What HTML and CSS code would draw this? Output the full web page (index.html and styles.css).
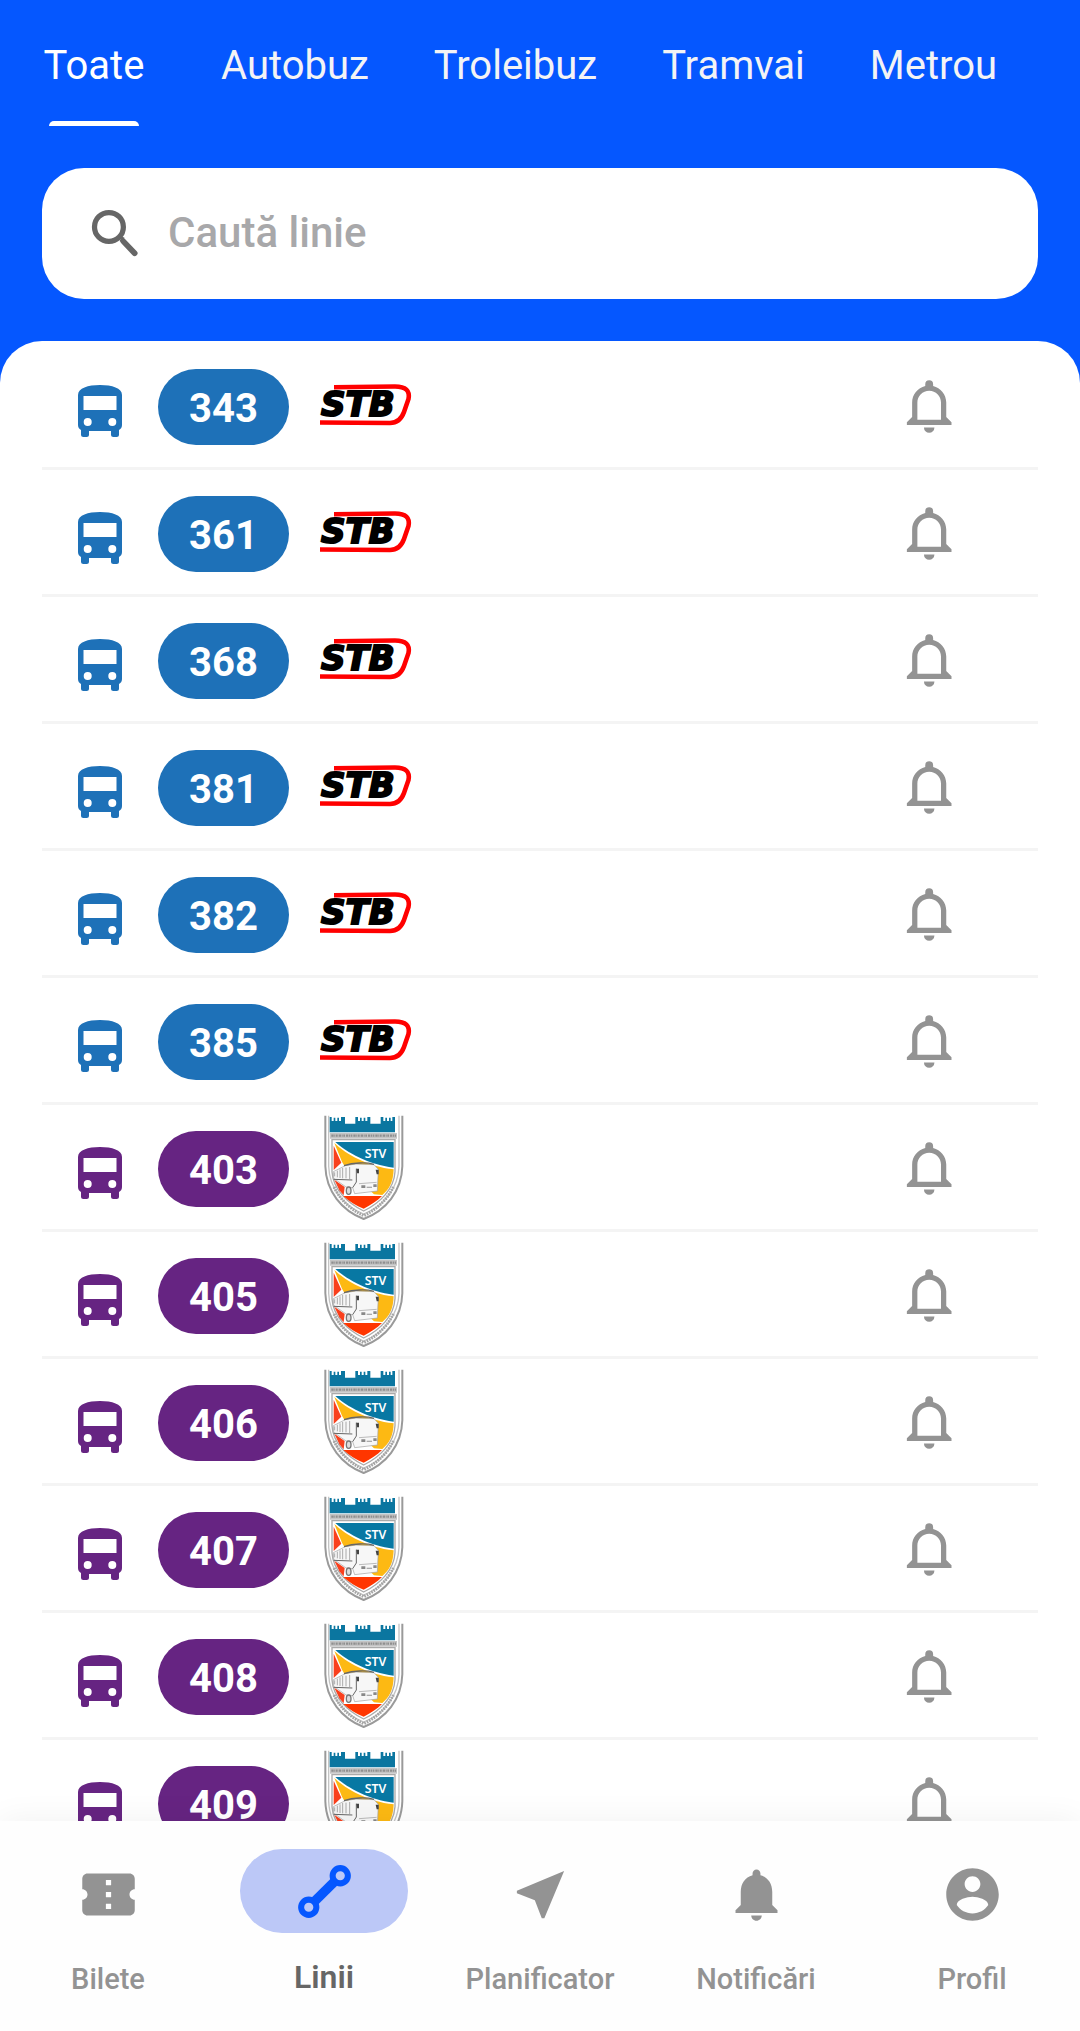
FILE: index.html
```html
<!DOCTYPE html>
<html lang="ro">
<head>
  <meta charset="UTF-8">
  <meta name="viewport" content="width=device-width, initial-scale=1.0">
  <title>Linii</title>
  <link rel="stylesheet" href="styles.css">
</head>
<body>
  <svg class="sprite" aria-hidden="true">
    <symbol id="bus" viewBox="0 0 44 52">
      <path fill-rule="evenodd" d="M0 10C0 3 10 0 22 0s22 3 22 10v30c0 2-1 4-3 5v4.500a2.500 2.500 0 0 1-2.500 2.500h-3a2.500 2.500 0 0 1-2.500-2.500V46H11v3.500A2.500 2.500 0 0 1 8.500 52h-3A2.500 2.500 0 0 1 3 49.500V45c-2-1-3-3-3-5zM5.500 11v14h33V11zM9.700 33a4 4 0 1 0 0 8a4 4 0 1 0 0-8zM34.300 33a4 4 0 1 0 0 8a4 4 0 1 0 0-8z"/>
    </symbol>
    <symbol id="bell-outline" viewBox="0 0 24 24">
      <path d="M16,17H7V10.5C7,8 9,6 11.5,6C14,6 16,8 16,10.5M18,16V10.5C18,7.43 15.86,4.86 13,4.18V3.5A1.5,1.5 0 0,0 11.5,2A1.5,1.5 0 0,0 10,3.5V4.18C7.13,4.86 5,7.43 5,10.5V16L3,18V19H20V18M11.5,22A2,2 0 0,0 13.5,20H9.5A2,2 0 0,0 11.5,22Z"/>
    </symbol>
    <symbol id="stb" viewBox="0 0 96 44">
      <path d="M17 4.200L78 3.500Q94 3.500 91.500 16L87 29Q83 40 73 40L3 39.500" fill="none" stroke="#f00" stroke-width="4.600"/>
      <text x="4" y="33" class="stb-text">STB</text>
    </symbol>
    <symbol id="stv" viewBox="72 46 240 318">
      <path d="M76 48V200C78 275 125 332 191 358C258 332 305 275 307 200V48" fill="#fff" stroke="#9a9a9a" stroke-width="6"/>
      <path d="M86 48V200C88 266 130 318 191 343C252 318 295 266 297 200V48" fill="none" stroke="#c4c4c4" stroke-width="4"/>
      <path d="M102 262C122 302 153 330 191 348C229 330 260 302 280 262" fill="none" stroke="#a5a5a5" stroke-width="9" stroke-dasharray="5 3"/>
      <path d="M89 52h6v12h6V54h5v10h6V54h5v10h6V52h12v20h31V52h8v12h6V54h5v10h6V54h5v10h6V52h9v20h31V52h8v12h6V54h5v10h6V54h5v10h5V52h8v46H89z" fill="#0b76a0"/>
      <path d="M90 100H291V117H90z" fill="#c4c4c4"/>
      <path d="M94 108H288" stroke="#8f8f8f" stroke-width="7" stroke-dasharray="7 2 3 2 5 3"/>
      <path d="M96 120H285V216C282 268 240 310 191 334C142 310 99 268 96 216z" fill="#fff" stroke="#aaa" stroke-width="4"/>
      <path d="M106 127H281V204C205 195 140 158 106 127z" fill="#0878a3"/>
      <path d="M103 130C138 163 203 201 281 209C280 248 267 270 247 286L222 284L134 200L126 186z" fill="#fdb913"/>
      <path d="M101 138L124 189L101 211z" fill="#f9401d"/>
      <path d="M103 240L134 262L131 287L118 272z" fill="#f9401d"/>
      <path d="M130 289H246C231 304 210 318 191 327C168 318 147 305 130 289z" fill="#ff3600"/>
      <path d="M100 216L136 198L167 193L222 195L235 209L232 274L164 282L158 264L138 262L101 236z" fill="#f7f7f7" stroke="#a0a0a0" stroke-width="2"/>
      <path d="M104 218V230M112 213V233M120 209V235M128 205V236M138 204V236M149 202V238" stroke="#aaa" stroke-width="3"/>
      <path d="M132 198C160 189 198 187 222 194" fill="none" stroke="#666" stroke-width="4"/>
      <path d="M169 207V247L158 264M101 239L157 241" fill="none" stroke="#666" stroke-width="3"/>
      <path d="M177 252L230 248" stroke="#bbb" stroke-width="3"/>
      <path d="M227 210h9v14h-6zM169 207h8v14h-6z" fill="#444"/>
      <path d="M184 257h12v8h-12zM220 254h10v8h-10z" fill="#888"/>
      <path d="M200 263H216" stroke="#aaa" stroke-width="4"/>
      <ellipse cx="146" cy="273" rx="7" ry="11" fill="#ddd" stroke="#777" stroke-width="4"/>
      <text x="194" y="174" class="stv-text">STV</text>
    </symbol>
  </svg>

  <header class="header">
    <nav class="tabs">
      <button type="button" class="tab active">Toate</button>
      <button type="button" class="tab">Autobuz</button>
      <button type="button" class="tab">Troleibuz</button>
      <button type="button" class="tab">Tramvai</button>
      <button type="button" class="tab">Metrou</button>
    </nav>
    <div class="search">
      <label for="searchLine" aria-label="Caută linie">
        <svg class="icon" viewBox="0 0 24 24" fill="none" stroke="currentColor">
          <circle cx="9.500" cy="9.500" r="5.500" stroke-width="2"/>
          <path d="M14 14l1 .5" stroke-width="2"/>
          <path d="M15 15l4.300 4.500" stroke-width="2.200" stroke-linecap="round"/>
        </svg>
      </label>
      <input type="text" id="searchLine" placeholder="Caută linie">
    </div>
  </header>

  <main class="lines">
    <ul class="line-list">
      <li class="line stb">
        <svg class="bus"><use href="#bus"/></svg>
        <a href="#343" class="number">343</a>
        <svg class="logo-stb"><use href="#stb"/></svg>
        <button type="button" class="notify" aria-label="Notificări 343"><svg class="icon"><use href="#bell-outline"/></svg></button>
      </li>
      <li class="line stb">
        <svg class="bus"><use href="#bus"/></svg>
        <a href="#361" class="number">361</a>
        <svg class="logo-stb"><use href="#stb"/></svg>
        <button type="button" class="notify" aria-label="Notificări 361"><svg class="icon"><use href="#bell-outline"/></svg></button>
      </li>
      <li class="line stb">
        <svg class="bus"><use href="#bus"/></svg>
        <a href="#368" class="number">368</a>
        <svg class="logo-stb"><use href="#stb"/></svg>
        <button type="button" class="notify" aria-label="Notificări 368"><svg class="icon"><use href="#bell-outline"/></svg></button>
      </li>
      <li class="line stb">
        <svg class="bus"><use href="#bus"/></svg>
        <a href="#381" class="number">381</a>
        <svg class="logo-stb"><use href="#stb"/></svg>
        <button type="button" class="notify" aria-label="Notificări 381"><svg class="icon"><use href="#bell-outline"/></svg></button>
      </li>
      <li class="line stb">
        <svg class="bus"><use href="#bus"/></svg>
        <a href="#382" class="number">382</a>
        <svg class="logo-stb"><use href="#stb"/></svg>
        <button type="button" class="notify" aria-label="Notificări 382"><svg class="icon"><use href="#bell-outline"/></svg></button>
      </li>
      <li class="line stb">
        <svg class="bus"><use href="#bus"/></svg>
        <a href="#385" class="number">385</a>
        <svg class="logo-stb"><use href="#stb"/></svg>
        <button type="button" class="notify" aria-label="Notificări 385"><svg class="icon"><use href="#bell-outline"/></svg></button>
      </li>
      <li class="line stv">
        <svg class="bus"><use href="#bus"/></svg>
        <a href="#403" class="number">403</a>
        <svg class="logo-stv"><use href="#stv"/></svg>
        <button type="button" class="notify" aria-label="Notificări 403"><svg class="icon"><use href="#bell-outline"/></svg></button>
      </li>
      <li class="line stv">
        <svg class="bus"><use href="#bus"/></svg>
        <a href="#405" class="number">405</a>
        <svg class="logo-stv"><use href="#stv"/></svg>
        <button type="button" class="notify" aria-label="Notificări 405"><svg class="icon"><use href="#bell-outline"/></svg></button>
      </li>
      <li class="line stv">
        <svg class="bus"><use href="#bus"/></svg>
        <a href="#406" class="number">406</a>
        <svg class="logo-stv"><use href="#stv"/></svg>
        <button type="button" class="notify" aria-label="Notificări 406"><svg class="icon"><use href="#bell-outline"/></svg></button>
      </li>
      <li class="line stv">
        <svg class="bus"><use href="#bus"/></svg>
        <a href="#407" class="number">407</a>
        <svg class="logo-stv"><use href="#stv"/></svg>
        <button type="button" class="notify" aria-label="Notificări 407"><svg class="icon"><use href="#bell-outline"/></svg></button>
      </li>
      <li class="line stv">
        <svg class="bus"><use href="#bus"/></svg>
        <a href="#408" class="number">408</a>
        <svg class="logo-stv"><use href="#stv"/></svg>
        <button type="button" class="notify" aria-label="Notificări 408"><svg class="icon"><use href="#bell-outline"/></svg></button>
      </li>
      <li class="line stv">
        <svg class="bus"><use href="#bus"/></svg>
        <a href="#409" class="number">409</a>
        <svg class="logo-stv"><use href="#stv"/></svg>
        <button type="button" class="notify" aria-label="Notificări 409"><svg class="icon"><use href="#bell-outline"/></svg></button>
      </li>
    </ul>
  </main>

  <nav class="bottom-nav">
    <a href="#bilete" class="nav-item">
      <span class="nav-icon"><svg class="icon" viewBox="0 0 24 24"><path d="M22 10V6c0-1.110-.9-2-2-2H4c-1.100 0-1.990.89-1.990 2v4c1.100 0 1.990.9 1.990 2s-.89 2-2 2v4c0 1.100.9 2 2 2h16c1.100 0 2-.9 2-2v-4c-1.100 0-2-.9-2-2s.9-2 2-2zm-9 7.500h-2v-2h2v2zm0-4.500h-2v-2h2v2zm0-4.500h-2v-2h2v2z"/></svg></span>
      <span>Bilete</span>
    </a>
    <a href="#linii" class="nav-item active">
      <span class="nav-icon"><svg class="icon" viewBox="0 0 24 24" fill="none" stroke="currentColor"><circle cx="6" cy="18" r="2.900" stroke-width="2.300"/><circle cx="18" cy="6" r="2.900" stroke-width="2.300"/><path d="M8.300 15.700L15.700 8.300" stroke-width="3.600"/></svg></span>
      <span>Linii</span>
    </a>
    <a href="#planificator" class="nav-item">
      <span class="nav-icon"><svg class="icon" viewBox="0 0 24 24"><path d="M21 3L3 10.530v.98l6.840 2.650L12.480 21h.98L21 3z"/></svg></span>
      <span>Planificator</span>
    </a>
    <a href="#notificari" class="nav-item">
      <span class="nav-icon"><svg class="icon" viewBox="0 0 24 24"><path d="M12 22c1.100 0 2-.9 2-2h-4c0 1.100.89 2 2 2zm6-6v-5c0-3.070-1.640-5.640-4.500-6.320V4c0-.83-.67-1.500-1.500-1.500s-1.500.67-1.500 1.500v.68C7.630 5.360 6 7.920 6 11v5l-2 2v1h16v-1l-2-2z"/></svg></span>
      <span>Notificări</span>
    </a>
    <a href="#profil" class="nav-item">
      <span class="nav-icon"><svg class="icon" viewBox="0 0 24 24"><path d="M12 2C6.480 2 2 6.480 2 12s4.480 10 10 10 10-4.480 10-10S17.520 2 12 2zm0 3c1.660 0 3 1.340 3 3s-1.340 3-3 3-3-1.340-3-3 1.340-3 3-3zm0 14.200c-2.500 0-4.710-1.280-6-3.220.03-1.990 4-3.080 6-3.080 1.990 0 5.970 1.090 6 3.080-1.290 1.940-3.500 3.220-6 3.220z"/></svg></span>
      <span>Profil</span>
    </a>
  </nav>
</body>
</html>
```
FILE: styles.css
```css
* {
  box-sizing: border-box;
}
body {
  margin: 0;
  height: 100vh;
  display: flex;
  flex-direction: column;
  overflow: hidden;
  background: #0557ff;
  font-family: Roboto, "Noto Sans", sans-serif;
}
button {
  border: none;
  background: none;
  padding: 0;
  font: inherit;
  cursor: pointer;
}
a {
  text-decoration: none;
}
.sprite {
  display: none;
}
.icon {
  display: block;
  width: 63px;
  height: 63px;
  fill: currentColor;
}
.icon[fill="none"] {
  fill: none;
}

/* header */
.header {
  flex: none;
  padding-bottom: 42px;
}
.tabs {
  display: flex;
  gap: 1px;
}
.tab {
  position: relative;
  min-width: 188px;
  height: 126px;
  padding: 4px 32px 0;
  font-size: 40px;
  color: #f3f3f5;
  white-space: nowrap;
}
.tab.active {
  color: #fff;
}
.tab.active::after {
  content: "";
  position: absolute;
  left: 49px;
  right: 49px;
  bottom: 0;
  height: 5px;
  background: #fff;
  border-radius: 5px 5px 0 0;
}
.search {
  display: flex;
  align-items: center;
  gap: 21px;
  height: 131px;
  margin: 42px 42px 0;
  padding: 0 42px;
  background: #fff;
  border-radius: 42px;
  color: #666;
}
.search input {
  flex: 1;
  min-width: 0;
  padding: 0 0 2px;
  border: none;
  outline: none;
  background: none;
  font: 500 42px Roboto, "Noto Sans", sans-serif;
  color: #666;
}
.search input::placeholder {
  color: #a8a8aa;
  opacity: 1;
}

/* list of lines */
.lines {
  flex: 1;
  min-height: 0;
  overflow: hidden;
  background: #fff;
  border-radius: 42px 42px 0 0;
}
.line-list {
  list-style: none;
  margin: 0;
  padding: 2px 42px 0;
}
.line {
  display: flex;
  align-items: center;
  height: 127px;
  padding: 0 76px 0 36px;
  border-bottom: 3px solid #f4f4f4;
}
.line.stb {
  --line-color: #1e71b8;
}
.line.stv {
  --line-color: #662482;
}
.bus {
  width: 44px;
  height: 52px;
  margin-top: 12px;
  fill: var(--line-color);
}
.number {
  width: 131px;
  margin: 4px 28px 0 36px;
  padding-top: 4px;
  background: var(--line-color);
  border-radius: 38px;
  color: #fff;
  font-size: 40px;
  font-weight: 700;
  line-height: 72px;
  text-align: center;
}
.logo-stb {
  width: 96px;
  height: 44px;
}
.logo-stv {
  width: 80px;
  height: 106px;
  margin: 2px 9px 0 7px;
}
.stb-text {
  font: italic 700 34px "DejaVu Sans", sans-serif;
  fill: #000;
  stroke: #000;
  stroke-width: 2px;
}
.stv-text {
  font: 600 37px "Noto Sans", sans-serif;
  fill: #fff;
}
.notify {
  margin: 2px 0 0 auto;
  color: #939393;
}

/* bottom navigation */
.bottom-nav {
  flex: none;
  position: relative;
  display: flex;
  height: 210px;
  padding-top: 28px;
  background: #fefefe;
  box-shadow: 0 0 32px rgba(0, 0, 0, 0.06);
}
.nav-item {
  flex: 1;
  display: flex;
  flex-direction: column;
  align-items: center;
  gap: 28px;
  color: #939393;
  font-size: 29px;
  font-weight: 500;
  line-height: 36px;
}
.nav-icon {
  display: flex;
  align-items: center;
  justify-content: center;
  width: 168px;
  height: 84px;
  padding-top: 6px;
  border-radius: 42px;
}
.nav-item.active {
  gap: 26px;
  color: #666;
  font-size: 32px;
  font-weight: 600;
}
.nav-item.active .nav-icon {
  padding-top: 0;
  background: #bcc8f7;
  color: #0557ff;
}
```
